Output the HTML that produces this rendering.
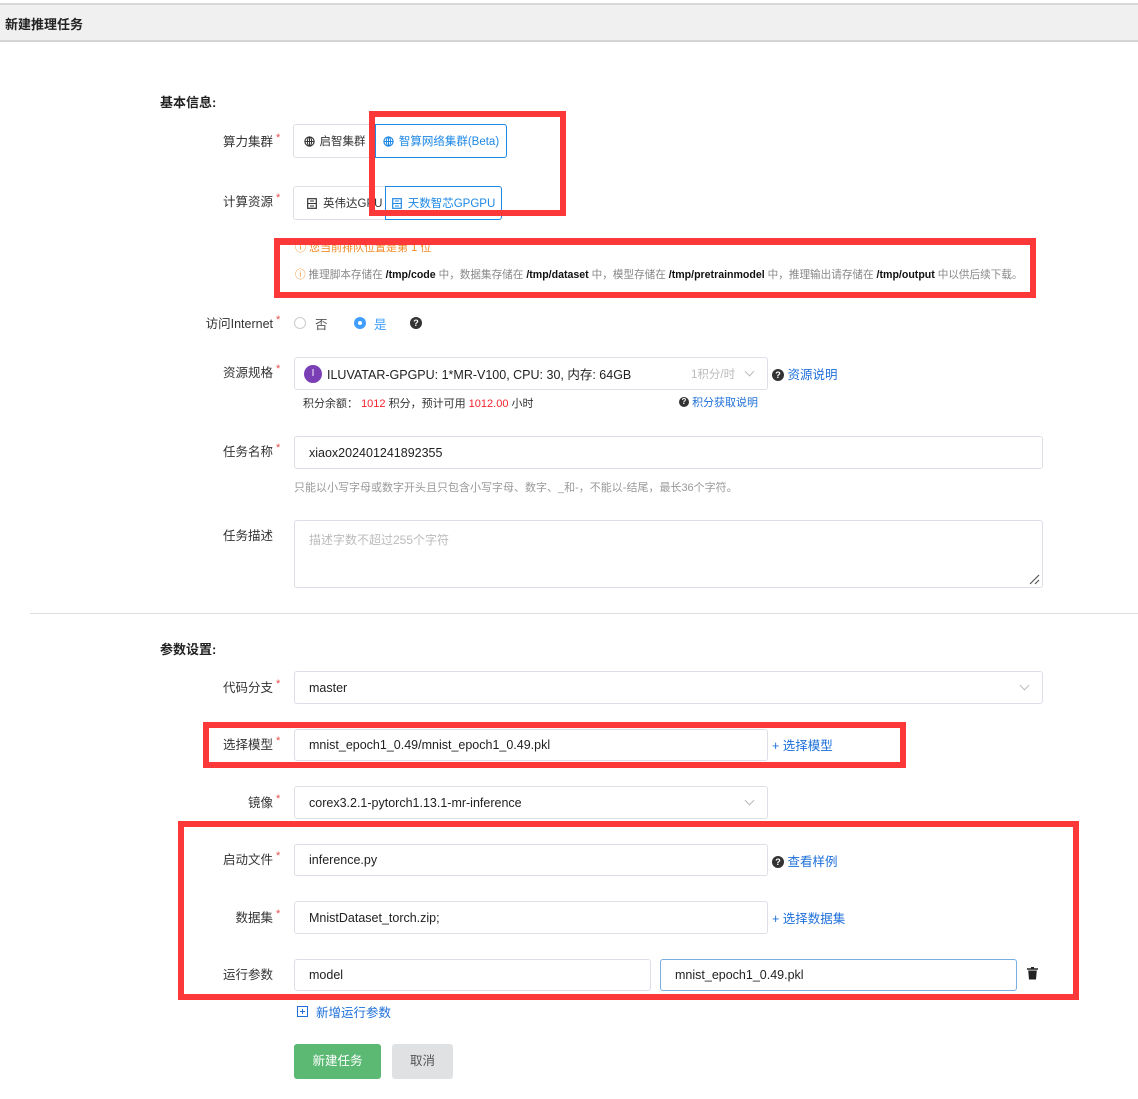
<!DOCTYPE html>
<html><head><meta charset="utf-8">
<style>
*{box-sizing:border-box;margin:0;padding:0}
body{width:1138px;height:1099px;position:relative;background:#fff;font-family:"Liberation Sans","Noto Sans CJK SC",sans-serif;color:#333;font-size:13px;overflow:hidden}
.a{position:absolute}
.hdr{left:0;top:3px;width:1138px;height:39px;background:#f0f0f0;border-top:2px solid #d8d8d8;border-bottom:2px solid #d4d4d4}
.hdr span{position:absolute;left:5px;top:9px;font-size:13px;font-weight:bold;color:#222}
.sec{font-size:13px;font-weight:bold;color:#222}
.lbl{width:200px;text-align:right;font-size:12.5px;color:#333;line-height:16px}
.star{color:#e84c4c;font-size:11px;position:absolute;top:-4px;margin-left:3px}
.inp{border:1px solid #dcdfe6;border-radius:3px;background:#fff;font-size:12.5px;color:#222;padding-left:14px;display:flex;align-items:center}
.btn{border:1px solid #dcdfe6;display:flex;align-items:center;justify-content:center;font-size:11.5px;color:#333;background:#fff}
.btn.on{border-color:#1e88e5;color:#1e88e5;border-radius:0 3px 3px 0}
.blue{color:#1e6fd9}
.red{border:6px solid #fc3838}
.chev{position:absolute;right:14px;top:10px;width:7px;height:7px;border-right:1px solid #bbb;border-bottom:1px solid #bbb;transform:rotate(45deg)}
.q{display:inline-block;width:12px;height:12px;border-radius:50%;background:#333;color:#fff;font-size:9px;font-weight:bold;text-align:center;line-height:12px;vertical-align:middle;position:relative;top:-1px}
</style></head><body>
<div class="a hdr"><span>新建推理任务</span></div>

<div class="a sec" style="left:160px;top:92px">基本信息:</div>

<div class="a lbl" style="left:73px;top:134px">算力集群<span class="star">*</span></div>
<div class="a btn" style="left:293px;top:124px;width:83px;height:34px;border-radius:3px 0 0 3px">
<svg width="11" height="11" viewBox="0 0 12 12" style="margin-right:5px"><circle cx="6" cy="6" r="5" fill="none" stroke="#333" stroke-width="1.3"/><path d="M1 6h10M6 1v10" stroke="#333" stroke-width="1.1"/><ellipse cx="6" cy="6" rx="2.3" ry="5" fill="none" stroke="#333" stroke-width="1.1"/></svg>启智集群</div>
<div class="a btn on" style="left:375px;top:124px;width:132px;height:34px">
<svg width="11" height="11" viewBox="0 0 12 12" style="margin-right:5px"><circle cx="6" cy="6" r="5" fill="none" stroke="#1e88e5" stroke-width="1.3"/><path d="M1 6h10M6 1v10" stroke="#1e88e5" stroke-width="1.1"/><ellipse cx="6" cy="6" rx="2.3" ry="5" fill="none" stroke="#1e88e5" stroke-width="1.1"/></svg>智算网络集群(Beta)</div>

<div class="a lbl" style="left:73px;top:194px">计算资源<span class="star">*</span></div>
<div class="a btn" style="left:293px;top:186px;width:93px;height:34px;border-radius:3px 0 0 3px;justify-content:flex-start;padding-left:13px;overflow:hidden">
<svg width="10" height="11" viewBox="0 0 10 11" style="margin-right:6px"><rect x="0.7" y="0.7" width="8.6" height="9.6" fill="none" stroke="#333" stroke-width="1.2"/><path d="M1 5.5h8M3 3h4M3 8h4" stroke="#333" stroke-width="1.1"/></svg>英伟达GPU</div>
<div class="a btn on" style="left:385px;top:186px;width:117px;height:34px">
<svg width="10" height="11" viewBox="0 0 10 11" style="margin-right:6px"><rect x="0.7" y="0.7" width="8.6" height="9.6" fill="none" stroke="#1e88e5" stroke-width="1.2"/><path d="M1 5.5h8M3 3h4M3 8h4" stroke="#1e88e5" stroke-width="1.1"/></svg>天数智芯GPGPU</div>

<div class="a" style="left:295px;top:239px;font-size:11px;color:#f08a24">ⓘ 您当前排队位置是第 1 位</div>
<div class="a" style="left:295px;top:267px;font-size:10.6px;color:#888;white-space:nowrap"><span style="color:#f08a24">ⓘ</span> 推理脚本存储在 <b style="color:#111">/tmp/code</b> 中，数据集存储在 <b style="color:#111">/tmp/dataset</b> 中，模型存储在 <b style="color:#111">/tmp/pretrainmodel</b> 中，推理输出请存储在 <b style="color:#111">/tmp/output</b> 中以供后续下载。</div>

<div class="a red" style="left:369px;top:111px;width:197px;height:105px"></div>
<div class="a red" style="left:274px;top:238px;width:762px;height:60px;border-top-width:7px"></div>

<div class="a lbl" style="left:73px;top:316px">访问Internet<span class="star">*</span></div>
<div class="a" style="left:294px;top:317px;width:12px;height:12px;border:1px solid #ccc;border-radius:50%"></div>
<div class="a" style="left:315px;top:314px;font-size:12.5px;color:#555">否</div>
<div class="a" style="left:354px;top:317px;width:12px;height:12px;border-radius:50%;background:#409eff"><div style="width:4px;height:4px;background:#fff;border-radius:50%;margin:4px"></div></div>
<div class="a" style="left:374px;top:314px;font-size:12.5px;color:#409eff">是</div>
<div class="q" style="position:absolute;left:410px;top:317px">?</div>

<div class="a lbl" style="left:73px;top:365px">资源规格<span class="star">*</span></div>
<div class="a inp" style="left:294px;top:357px;width:474px;height:33px;padding-left:9px">
<span style="display:inline-block;width:18px;height:18px;border-radius:50%;background:#7b3fb5;color:#fff;font-size:10px;text-align:center;line-height:18px;margin-right:5px">I</span>ILUVATAR-GPGPU: 1*MR-V100, CPU: 30, 内存: 64GB
<span style="position:absolute;left:396px;color:#bbb;font-size:11.5px">1积分/时</span><span class="chev"></span></div>
<div class="a" style="left:772px;top:364px;font-size:12.5px"><span class="q">?</span> <span class="blue">资源说明</span></div>
<div class="a" style="left:303px;top:395px;font-size:11px;color:#333">积分余额： <span style="color:#f5222d">1012</span> 积分，预计可用 <span style="color:#f5222d">1012.00</span> 小时</div>
<div class="a" style="left:679px;top:394px;font-size:11px"><span class="q" style="width:10px;height:10px;line-height:10px;font-size:8px">?</span> <span class="blue">积分获取说明</span></div>

<div class="a lbl" style="left:73px;top:444px">任务名称<span class="star">*</span></div>
<div class="a inp" style="left:294px;top:436px;width:749px;height:33px">xiaox202401241892355</div>
<div class="a" style="left:294px;top:479px;font-size:11px;color:#999">只能以小写字母或数字开头且只包含小写字母、数字、_和-，不能以-结尾，最长36个字符。</div>

<div class="a lbl" style="left:73px;top:528px">任务描述</div>
<div class="a inp" style="left:294px;top:520px;width:749px;height:68px;align-items:flex-start;padding-top:10px;color:#bbb;font-size:12px">描述字数不超过255个字符
<svg class="a" style="right:2px;bottom:2px" width="12" height="12"><path d="M2 11L11 2M7 11L11 7" stroke="#555" stroke-width="1.2"/></svg></div>

<div class="a" style="left:30px;top:613px;width:1108px;height:1px;background:#ddd"></div>

<div class="a sec" style="left:160px;top:639px">参数设置:</div>

<div class="a lbl" style="left:73px;top:680px">代码分支<span class="star">*</span></div>
<div class="a inp" style="left:294px;top:671px;width:749px;height:33px">master<span class="chev"></span></div>

<div class="a lbl" style="left:73px;top:737px">选择模型<span class="star">*</span></div>
<div class="a inp" style="left:294px;top:729px;width:474px;height:32px">mnist_epoch1_0.49/mnist_epoch1_0.49.pkl</div>
<div class="a blue" style="left:772px;top:735px;font-size:12.5px">+ 选择模型</div>
<div class="a red" style="left:203px;top:722px;width:703px;height:46px"></div>

<div class="a lbl" style="left:73px;top:795px">镜像<span class="star">*</span></div>
<div class="a inp" style="left:294px;top:786px;width:474px;height:33px">corex3.2.1-pytorch1.13.1-mr-inference<span class="chev"></span></div>

<div class="a lbl" style="left:73px;top:852px">启动文件<span class="star">*</span></div>
<div class="a inp" style="left:294px;top:844px;width:474px;height:32px">inference.py</div>
<div class="a" style="left:772px;top:851px;font-size:12.5px"><span class="q">?</span> <span class="blue">查看样例</span></div>

<div class="a lbl" style="left:73px;top:910px">数据集<span class="star">*</span></div>
<div class="a inp" style="left:294px;top:901px;width:474px;height:33px">MnistDataset_torch.zip;</div>
<div class="a blue" style="left:772px;top:908px;font-size:12.5px">+ 选择数据集</div>

<div class="a lbl" style="left:73px;top:967px">运行参数</div>
<div class="a inp" style="left:294px;top:959px;width:357px;height:32px">model</div>
<div class="a inp" style="left:660px;top:959px;width:357px;height:32px;border-color:#7aaee0">mnist_epoch1_0.49.pkl</div>
<svg class="a" style="left:1027px;top:967px" width="11" height="13" viewBox="0 0 11 13"><path d="M0 2h11M4 0.5h3" stroke="#222" stroke-width="1.5"/><path d="M1.2 3.5h8.6l-0.8 9h-7z" fill="#222"/></svg>
<div class="a red" style="left:178px;top:821px;width:901px;height:179px"></div>

<div class="a blue" style="left:297px;top:1002px;font-size:12.5px;display:flex;align-items:center">
<svg width="11" height="11" style="margin-right:8px"><rect x="0.5" y="0.5" width="10" height="10" fill="none" stroke="#1e6fd9"/><path d="M3 5.5h5M5.5 3v5" stroke="#1e6fd9"/></svg>新增运行参数</div>

<div class="a" style="left:294px;top:1044px;width:87px;height:35px;background:#5bb974;border-radius:3px;color:#fff;font-size:12.5px;text-align:center;line-height:35px">新建任务</div>
<div class="a" style="left:392px;top:1044px;width:61px;height:35px;background:#e0e1e3;border-radius:3px;color:#555;font-size:12.5px;text-align:center;line-height:35px">取消</div>
</body></html>
